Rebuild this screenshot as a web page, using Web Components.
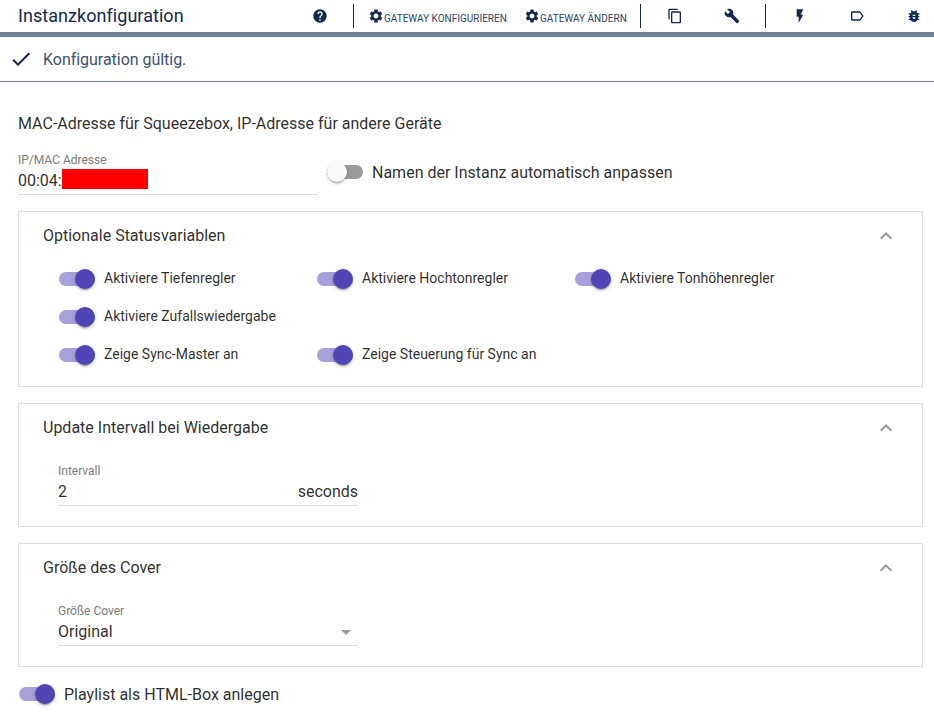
<!DOCTYPE html>
<html lang="de">
<head>
<meta charset="utf-8">
<title>Instanzkonfiguration</title>
<style>
html,body{margin:0;background:#fff;font-family:Roboto,"Liberation Sans",sans-serif;color:rgba(0,0,0,.84)}
body{height:715px;overflow:hidden}
</style>
</head>
<body>
<instance-config></instance-config>
<script>
const ICONS = {
  help: 'M12 2C6.48 2 2 6.48 2 12s4.48 10 10 10 10-4.48 10-10S17.52 2 12 2zm1 17h-2v-2h2v2zm2.07-7.75l-.9.92C13.45 12.9 13 13.5 13 15h-2v-.5c0-1.1.45-2.1 1.17-2.83l1.24-1.26c.37-.36.59-.86.59-1.41 0-1.1-.9-2-2-2s-2 .9-2 2H8c0-2.21 1.79-4 4-4s4 1.79 4 4c0 .88-.36 1.68-.93 2.25z',
  gear: 'M19.14 12.94c.04-.3.06-.61.06-.94 0-.32-.02-.64-.07-.94l2.03-1.58c.18-.14.23-.41.12-.61l-1.92-3.32c-.12-.22-.37-.29-.59-.22l-2.39.96c-.5-.38-1.03-.7-1.62-.94l-.36-2.54c-.04-.24-.24-.41-.48-.41h-3.84c-.24 0-.43.17-.47.41l-.36 2.54c-.59.24-1.13.57-1.62.94l-2.39-.96c-.22-.08-.47 0-.59.22L2.74 8.87c-.12.21-.08.47.12.61l2.03 1.58c-.05.3-.09.63-.09.94s.02.64.07.94l-2.03 1.58c-.18.14-.23.41-.12.61l1.92 3.32c.12.22.37.29.59.22l2.39-.96c.5.38 1.03.7 1.62.94l.36 2.54c.05.24.24.41.48.41h3.84c.24 0 .44-.17.47-.41l.36-2.54c.59-.24 1.13-.56 1.62-.94l2.39.96c.22.08.47 0 .59-.22l1.92-3.32c.12-.22.07-.47-.12-.61l-2.01-1.58zM12 15.6c-1.98 0-3.6-1.62-3.6-3.6s1.62-3.6 3.6-3.6 3.6 1.62 3.6 3.6-1.62 3.6-3.6 3.6z',
  copy: 'M16 1H4c-1.1 0-2 .9-2 2v14h2V3h12V1zm3 4H8c-1.1 0-2 .9-2 2v14c0 1.1.9 2 2 2h11c1.1 0 2-.9 2-2V7c0-1.1-.9-2-2-2zm0 16H8V7h11v14z',
  build: 'M22.7 19l-9.1-9.1c.9-2.3.4-5-1.5-6.9-2-2-5-2.4-7.4-1.3L9 6 6 9 1.6 4.7C.4 7.1.9 10.1 2.9 12.1c1.9 1.9 4.6 2.4 6.9 1.5l9.1 9.1c.4.4 1 .4 1.4 0l2.3-2.3c.5-.4.5-1.1.1-1.4z',
  flash: 'M7 2v11h3v9l7-12h-4l4-8z',
  label: 'M17.63 5.84C17.27 5.33 16.67 5 16 5L5 5.01C3.9 5.01 3 5.9 3 7v10c0 1.1.9 1.99 2 1.99L16 19c.67 0 1.27-.33 1.63-.84L22 12l-4.37-6.16zM16 17H5V7h11l3.55 5L16 17z',
  bug: 'M20 8h-2.81c-.45-.78-1.07-1.45-1.82-1.96L17 4.41 15.59 3l-2.17 2.17C12.96 5.06 12.49 5 12 5s-.96.06-1.41.17L8.41 3 7 4.41l1.62 1.63C7.88 6.55 7.26 7.22 6.81 8H4v2h2.09c-.05.33-.09.66-.09 1v1H4v2h2v1c0 .34.04.67.09 1H4v2h2.81c1.04 1.79 2.97 3 5.19 3s4.15-1.21 5.19-3H20v-2h-2.09c.05-.33.09-.66.09-1v-1h2v-2h-2v-1c0-.34-.04-.67-.09-1H20V8zm-6 8h-4v-2h4v2zm0-4h-4v-2h4v2z',
  check: 'M9 16.17L4.83 12l-1.42 1.41L9 19 21 7l-1.41-1.41z',
  up: 'M12 8l-6 6 1.41 1.41L12 10.83l4.59 4.58L18 14z'
};
const define = (name, render) => customElements.define(name, class extends HTMLElement {
  constructor() { super(); this.attachShadow({mode: 'open'}); }
  connectedCallback() { this.shadowRoot.innerHTML = render(this); }
});

define('md-icon', el => `
<style>:host{display:block;flex:none;width:var(--icon-size,16px);height:var(--icon-size,16px)}svg{display:block;width:100%;height:100%;fill:currentColor}</style>
<svg viewBox="0 0 24 24"><path d="${ICONS[el.getAttribute('name')]}"/></svg>`);

define('icon-button', el => `
<style>:host{display:flex;flex:none;width:57px;height:32px;align-items:center;justify-content:center}</style>
<md-icon name="${el.getAttribute('icon')}"></md-icon>`);

define('gateway-button', () => `
<style>:host{display:flex;flex:none;align-items:center;height:32px;font-size:10px;line-height:13px;color:#2f4365}
span{white-space:nowrap;padding-top:5px}md-icon{color:#11284f}</style>
<md-icon name="gear"></md-icon><span><slot></slot></span>`);

define('tool-bar', () => `
<style>
:host{display:flex;box-sizing:border-box;height:37px;border-bottom:5px solid #6e8197;color:#11284f;align-items:center}
h1{flex:none;align-self:flex-start;margin:0;width:273.5px;padding-left:18px;font-size:18px;line-height:31px;font-weight:400;letter-spacing:.05px}
i{flex:none;width:1px;height:24px;background:#11284f}
.help{margin-right:4.5px}.g1{margin-left:14px;width:156px}.g2{width:116px}.copy{margin-left:5.5px}.wrench{margin-right:4.5px}.flash{margin-left:5.5px}
</style>
<h1>Instanzkonfiguration</h1>
<icon-button class="help" icon="help"></icon-button><i></i>
<gateway-button class="g1">GATEWAY KONFIGURIEREN</gateway-button>
<gateway-button class="g2">GATEWAY ÄNDERN</gateway-button><i></i>
<icon-button class="copy" icon="copy"></icon-button><icon-button class="wrench" icon="build"></icon-button><i></i>
<icon-button class="flash" icon="flash"></icon-button><icon-button icon="label"></icon-button><icon-button icon="bug"></icon-button>`);

define('status-line', () => `
<style>:host{display:flex;box-sizing:border-box;height:45px;padding:1px 0 0 9px;align-items:center;border-bottom:1px solid #6e8197;color:#11284f;--icon-size:24px}
md-icon{margin-top:-1px}
span{margin-left:10px;font-size:16px;line-height:23px;color:#3d5070;letter-spacing:-.03px}</style>
<md-icon name="check"></md-icon><span><slot></slot></span>`);

define('slide-toggle', () => `
<style>
:host{display:flex;align-items:center;height:24px;font-size:14px;line-height:20px;white-space:nowrap}
b{flex:none;display:flex;align-items:center;width:36px;height:14px;border-radius:7px;background:#a7a0da;justify-content:flex-end;margin-right:9px}
b::after{content:"";width:20px;height:20px;border-radius:50%;background:#4f45b4;box-shadow:0 3px 1px -2px rgba(0,0,0,.2),0 2px 2px rgba(0,0,0,.14),0 1px 5px rgba(0,0,0,.12)}
span{padding-bottom:2px}
:host([off]) b{background:#9a9a9a;justify-content:flex-start}:host([off]) b::after{background:#fafafa}
:host([large]){font-size:16px;line-height:19px}
:host([large]) span{padding:1px 0 0}
</style><b></b><span><slot></slot></span>`);

define('form-field', el => `
<style>
:host{display:block;box-sizing:border-box;width:300px;height:43px;border-bottom:1px solid #dcdcdc}
label{display:block;font-size:12px;line-height:16px;color:#7b7b7b}
div{display:flex;justify-content:space-between;align-items:flex-start;font-size:16px;line-height:19px;height:20px;padding-top:3px}
</style><label>${el.getAttribute('label')}</label><div><slot></slot><slot name="suffix"></slot></div>`);

define('expansion-panel', el => `
<style>
:host{display:block;box-sizing:border-box;width:905px;border:1px solid #dedede;margin-bottom:16px}
header{display:flex;justify-content:space-between;align-items:center;height:48px;padding:0 24px;font-size:16px;line-height:19px}
span{padding-bottom:1px}
md-icon{color:#999;--icon-size:24px}
</style><header><span>${el.getAttribute('heading')}</span><md-icon name="up"></md-icon></header><slot></slot>`);

define('instance-config', () => `
<style>
:host{display:block}
main{padding-left:18px}
p{margin:30px 0 1px;font-size:16px;line-height:23px}
.row{display:flex;height:75px;align-items:flex-start}
.row form-field{margin-top:16px}.row slide-toggle{margin:24px 0 0 9px}
.value{display:flex;align-items:flex-start}.mask{display:block;width:86px;height:20px;background:#f00;margin-top:-2px}
.grid{display:grid;grid-template-columns:258px 258px 258px;grid-auto-rows:38px;padding:0 0 12px 40px;align-items:center}
.grid slide-toggle:nth-child(4){grid-column:1/-1}
.body{height:74px;padding:11px 0 0 39px;box-sizing:border-box}
.caret{align-self:center;border:5px solid transparent;border-top-color:#999;border-bottom:0;margin-right:7px}
.last{margin:-1px 0 0 1px}
</style>
<tool-bar></tool-bar>
<status-line>Konfiguration gültig.</status-line>
<main>
<p>MAC-Adresse für Squeezebox, IP-Adresse für andere Geräte</p>
<div class="row">
<form-field label="IP/MAC Adresse"><span class="value">00:04:<span class="mask"></span></span></form-field>
<slide-toggle off large>Namen der Instanz automatisch anpassen</slide-toggle>
</div>
<expansion-panel heading="Optionale Statusvariablen"><div class="grid">
<slide-toggle>Aktiviere Tiefenregler</slide-toggle><slide-toggle>Aktiviere Hochtonregler</slide-toggle><slide-toggle>Aktiviere Tonhöhenregler</slide-toggle>
<slide-toggle>Aktiviere Zufallswiedergabe</slide-toggle>
<slide-toggle>Zeige Sync-Master an</slide-toggle><slide-toggle>Zeige Steuerung für Sync an</slide-toggle>
</div></expansion-panel>
<expansion-panel heading="Update Intervall bei Wiedergabe"><div class="body"><form-field label="Intervall"><span>2</span><span slot="suffix">seconds</span></form-field></div></expansion-panel>
<expansion-panel heading="Größe des Cover"><div class="body"><form-field label="Größe Cover"><span>Original</span><span slot="suffix" class="caret"></span></form-field></div></expansion-panel>
<slide-toggle class="last" large>Playlist als HTML-Box anlegen</slide-toggle>
</main>`);
</script>
</body>
</html>
